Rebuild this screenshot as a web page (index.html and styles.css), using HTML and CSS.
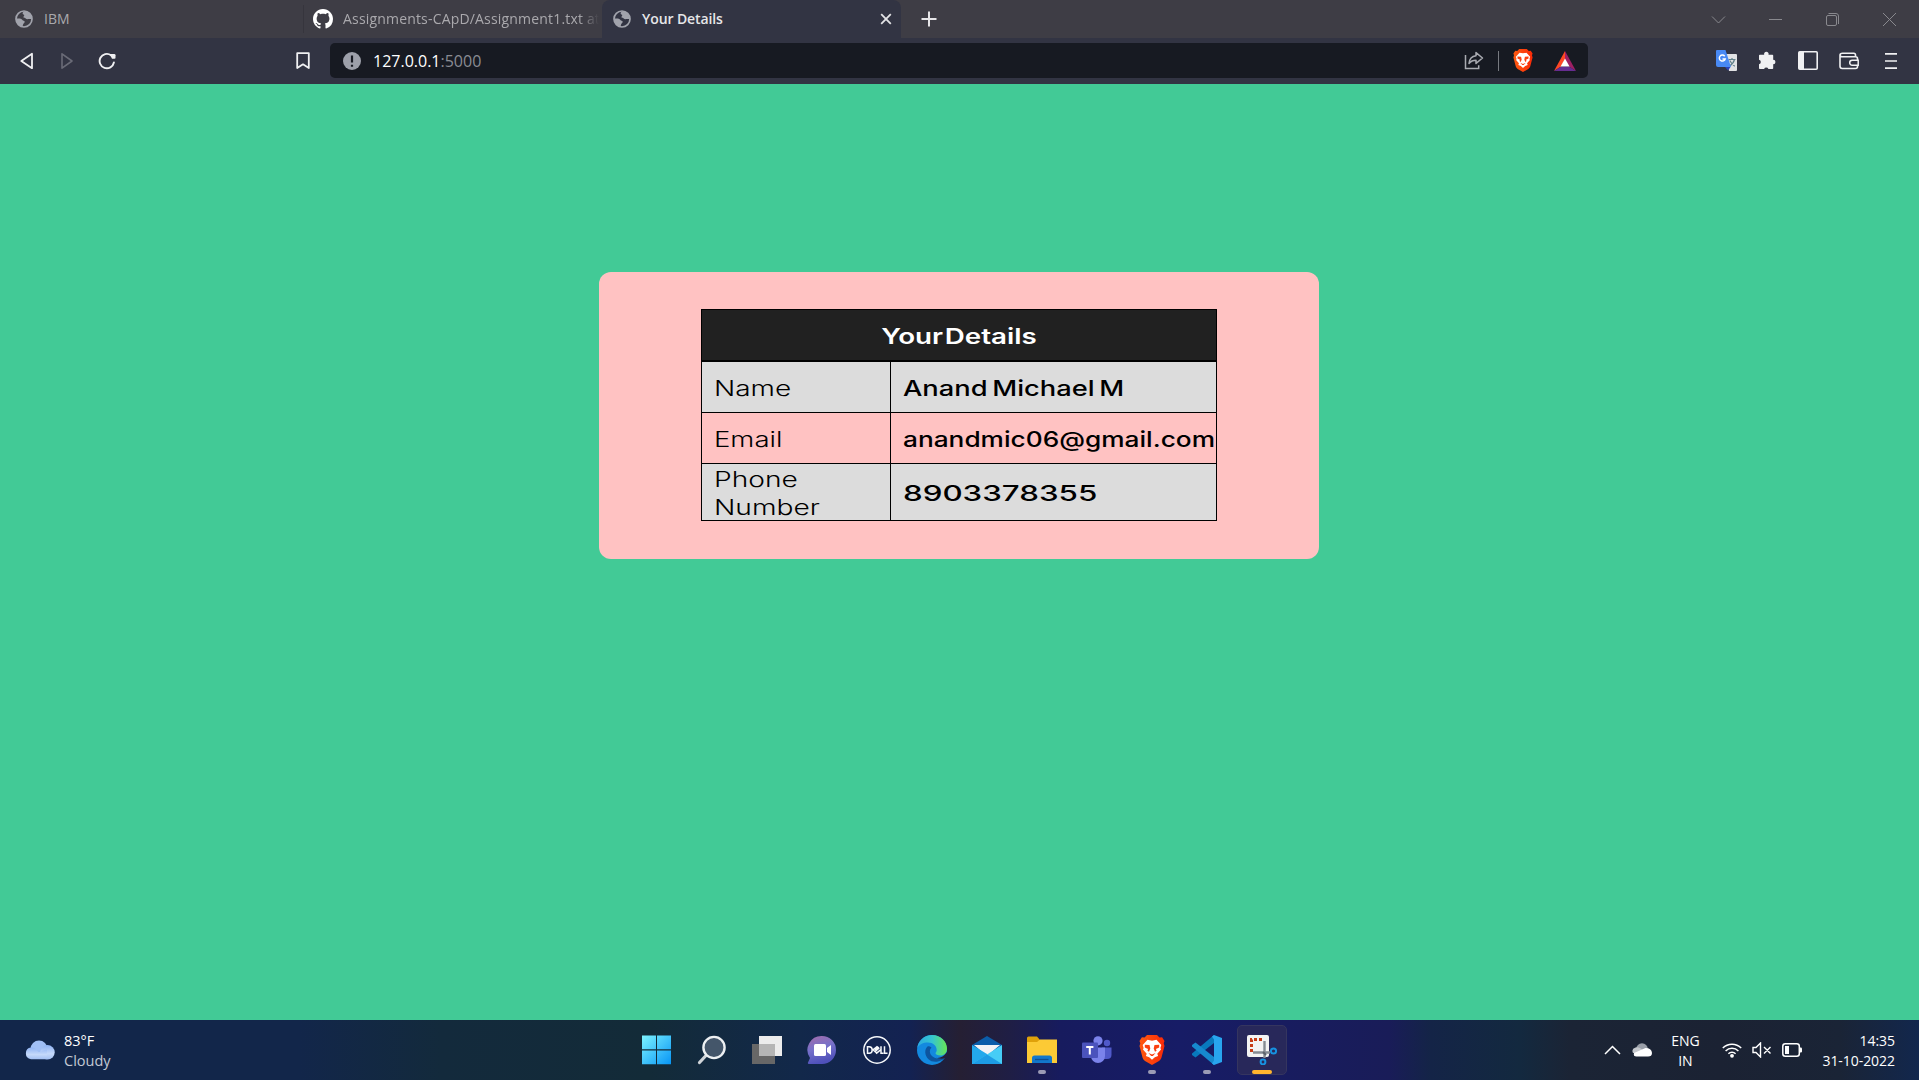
FILE: index.html
```html
<!DOCTYPE html>
<html lang="en">
<head>
<meta charset="utf-8">
<title>Your Details</title>
<link rel="stylesheet" href="styles.css">
</head>
<body>
<svg class="defs" width="0" height="0">
  <defs>
    <symbol id="globe" viewBox="0 0 18 18">
      <circle cx="9" cy="9" r="8" fill="none" stroke="currentColor" stroke-width="1.7"/>
      <path fill="currentColor" d="M9 1.200c-1 1-1.600 1.600-1.300 2.500.3.900 1.300.5 1.500 1.400.2 1-.9 1.300-.7 2.200.2.800 1.500.5 2.200 1.300.6.700 1.800.7 2.900.500 1.200-.2 2.400-.3 3.200-.1C16.800 4.500 13.500 1 9 1.200zM1.300 8.500c1.800 0 3.600-.2 5 .4 1.200.5 1.100 1.600 2.300 1.900 1 .2 1.300.8.900 1.800-.4.900-1.200.9-1.400 1.900-.1.800-.3 1.500-.9 2C3.800 15.600 1 12.800 1.300 8.500z"/>
    </symbol>
    <linearGradient id="braveGrad"><stop offset="0" stop-color="#ff5a10"/><stop offset="1" stop-color="#f92a08"/></linearGradient>
    <symbol id="brave" viewBox="0 0 26 30">
      <path fill="url(#braveGrad)" d="M8 0h10l2.500 2.600 2.600-.4L25.500 6l-.8 2.300.8 2.800-3 11.500c-.5 1.700-1.300 2.500-2.500 3.400L13 30l-7-4c-1.200-.9-2-1.700-2.500-3.400L.5 11.100l.8-2.800L.5 6l2.400-3.800 2.600.4z"/>
      <path fill="#fff" d="M8.500 4.800 13 5.700l4.500-.9 4.800 5.200-.9 2.900.6 1.600-3.700 4.200.8 2.200-3.300 1.400L13 24.700l-2.800-2.400-3.300-1.400.8-2.200L4 14.500l.6-1.600-.9-2.900z"/>
      <path fill="#fb4010" d="m5.800 9.700 4.700.4.800 3.500-1.300 3.200-1.600-1 .7-1.800-3.300-1.600zM20.200 9.700l-4.700.4-.8 3.500 1.300 3.200 1.600-1-.7-1.800 3.300-1.600zM9.500 18l3.500 1.500 3.500-1.500-2.600 3H12.100z"/>
    </symbol>
  </defs>
</svg>

<header class="tabs">
  <div class="tab tab-first">
    <svg class="favicon" width="18" height="18"><use href="#globe"/></svg>
    <span class="tab-title">IBM</span>
  </div>
  <div class="tab tab-second">
    <svg width="20" height="20" viewBox="0 0 16 16"><path fill="#fff" d="M8 0C3.580 0 0 3.580 0 8c0 3.540 2.290 6.530 5.470 7.590.4.070.55-.17.55-.38 0-.19-.01-.82-.01-1.490-2.010.37-2.530-.49-2.690-.94-.09-.23-.48-.94-.82-1.130-.28-.15-.68-.52-.01-.53.63-.01 1.080.58 1.230.82.72 1.210 1.870.87 2.330.66.07-.52.28-.87.51-1.070-1.780-.2-3.640-.89-3.640-3.950 0-.87.31-1.590.82-2.150-.08-.2-.36-1.020.08-2.120 0 0 .67-.21 2.200.82.64-.18 1.320-.27 2-.27s1.360.09 2 .27c1.530-1.040 2.200-.82 2.200-.82.44 1.100.16 1.920.08 2.120.51.56.82 1.270.82 2.150 0 3.070-1.870 3.750-3.650 3.950.29.25.54.73.54 1.480 0 1.070-.01 1.930-.01 2.200 0 .21.15.46.55.38A8.010 8.010 0 0 0 16 8c0-4.420-3.580-8-8-8z"/></svg>
    <span class="tab-title tab-title-long">Assignments-CApD/Assignment1.txt at</span>
  </div>
  <div class="tab tab-active">
    <svg class="favicon" width="18" height="18"><use href="#globe"/></svg>
    <span class="tab-title">Your Details</span>
    <svg class="tab-close" width="12" height="12" viewBox="0 0 12 12"><path d="m1.200 1.200 9.600 9.600m0-9.600-9.600 9.600" stroke="#e3e3e6" stroke-width="1.800"/></svg>
  </div>
  <svg class="new-tab" width="16" height="16" viewBox="0 0 16 16"><path d="M8 .5v15M.5 8h15" stroke="#e6e6e8" stroke-width="2"/></svg>
  <div class="window-controls">
    <svg width="15" height="15" viewBox="0 0 15 15"><path d="m1 4.500 6.500 6.500L14 4.500"/></svg>
    <svg width="15" height="15" viewBox="0 0 15 15"><path d="M1 7.500h13"/></svg>
    <svg width="15" height="15" viewBox="0 0 15 15"><rect x="1.500" y="3.500" width="10" height="10" rx="1.500"/><path d="M3.500 1.500H11a2.500 2.500 0 0 1 2.500 2.500v8"/></svg>
    <svg width="15" height="15" viewBox="0 0 15 15"><path d="m1 1 13 13M14 1 1 14"/></svg>
  </div>
</header>

<nav class="toolbar">
  <div class="nav-buttons">
    <svg width="16" height="18" viewBox="0 0 16 18"><path d="M13 1.800v14.400L2.300 9z" fill="none" stroke="#f0f0f2" stroke-width="1.800" stroke-linejoin="round"/></svg>
    <svg width="16" height="18" viewBox="0 0 16 18"><path d="M3 1.800v14.400L13 9z" fill="none" stroke="#6a6b77" stroke-width="1.600" stroke-linejoin="round"/></svg>
    <svg width="18" height="18" viewBox="0 0 18 18"><path d="M13 3.200A7.200 7.200 0 1 0 15.900 10.500" fill="none" stroke="#f0f0f2" stroke-width="1.900" stroke-linecap="round"/><path d="M11.500 2h4.700q1.300 0 1.300 1.300v2.500q0 1-1 1h-2.500z" fill="#f0f0f2"/></svg>
  </div>
  <svg class="bookmark" width="14" height="18" viewBox="0 0 14 18"><path d="M1.200 1.200h11.600v14.900L7 12.300l-5.800 3.800z" fill="none" stroke="#f0f0f2" stroke-width="1.800" stroke-linejoin="round"/></svg>
  <div class="address">
    <svg width="18" height="18" viewBox="0 0 18 18"><circle cx="9" cy="9" r="9" fill="#9da0aa"/><path d="M9 3.400v7.200M9 12.800v2" stroke="#171a22" stroke-width="2.200"/></svg>
    <span class="host">127.0.0.1<span class="port">:5000</span></span>
    <div class="address-actions">
      <svg width="20" height="19" viewBox="0 0 20 19"><path d="M1.500 4v13.500h13.200v-3.300" fill="none" stroke="#a9abb1" stroke-width="1.500"/><path d="M12 1.600 18.500 7 12 12.400V9.300c-3 0-5.100.8-7 3.200.4-4 2.800-7.200 7-7.700z" fill="none" stroke="#a9abb1" stroke-width="1.500" stroke-linejoin="round"/></svg>
      <i class="divider"></i>
      <svg class="brave-small" width="20" height="23"><use href="#brave"/></svg>
      <svg width="22" height="20" viewBox="0 0 22 20"><path fill="#ff4724" d="M11 0 0 20l7-4.500L11 8.500z"/><path fill="#9e1f63" d="m11 0 11 20-7-4.500-4-7z"/><path fill="#662d91" d="M0 20h22l-7-4.500H7z"/><path fill="#fff" d="m11 7.500 4.500 8h-9z"/></svg>
    </div>
  </div>
  <div class="extensions">
    <svg width="21" height="21" viewBox="0 0 21 21"><path fill="#e1e2e4" d="M10 4h10q1 0 1 1v15q0 1-1 1h-7z"/><path d="M12.500 9.500h7M16 8v1.500M18.500 9.500q-1 4-5 6.500M13.800 10.500q2 4 5 5.700" fill="none" stroke="#61808a" stroke-width="1.200"/><path fill="#2a43b9" d="M9 17h5.500L12 20.500z"/><path fill="#4889f4" d="M1 0h8.500L15 17H2q-2 0-2-2V1q0-1 1-1z"/><path d="M8.700 6.200A3 3 0 1 0 9.200 9H6.500" fill="none" stroke="#fff" stroke-width="1.500"/></svg>
    <svg width="19" height="19" viewBox="0 0 19 19"><path fill="#f0f0f2" d="M1.800 3.800h4.400a2.300 2.300 0 1 1 4.300 0h3.900q.8 0 .8.800v4.100a2.250 2.250 0 1 1 0 4.500v4.100q0 .8-.8.800h-4a2.300 2.300 0 0 0-4.300 0H1.800q-.8 0-.8-.8v-4.100a2.300 2.300 0 0 0 0-4.500V4.600q0-.8.800-.8z"/></svg>
    <svg width="20" height="20" viewBox="0 0 20 20"><rect x=".8" y=".8" width="18.400" height="17.400" rx="1" fill="none" stroke="#f0f0f2" stroke-width="1.600"/><path fill="#f0f0f2" d="M1 1h5v17H1z"/></svg>
    <svg width="20" height="18" viewBox="0 0 20 18"><path d="M16.500 5V3q0-1.700-1.700-1.700H3.500q-2.500 0-2.500 2v11q0 2.200 2.200 2.200h13.300q2 0 2-2V6.500q0-1.700-2-1.700H3.500Q1 4.800 1 3.200" fill="none" stroke="#f0f0f2" stroke-width="1.600"/><path d="M19.200 8.200h-6a2.500 2.500 0 0 0 0 5h6z" fill="#323443" stroke="#f0f0f2" stroke-width="1.500"/></svg>
    <svg width="12" height="18" viewBox="0 0 12 18"><path d="M0 1.800h12M0 9h12M0 16.200h12" stroke="#f0f0f2" stroke-width="1.700"/></svg>
  </div>
</nav>

<main class="page">
  <section class="card">
    <div class="details">
      <div class="row head"><span class="wide title">Your Details</span></div>
      <div class="row shaded"><div class="cell"><span class="wide w-name">Name</span></div><div class="cell value"><span class="wide w-person">Anand Michael M</span></div></div>
      <div class="row"><div class="cell"><span class="wide w-email">Email</span></div><div class="cell value"><span class="wide w-address">anandmic06@gmail.com</span></div></div>
      <div class="row shaded tall"><div class="cell"><span class="wide w-phone">Phone<br>Number</span></div><div class="cell value"><span class="wide w-digits">8903378355</span></div></div>
    </div>
  </section>
</main>

<footer class="taskbar">
  <div class="weather">
    <svg width="30" height="20" viewBox="0 0 30 20"><defs><linearGradient id="cl" x2="0" y2="1"><stop stop-color="#8fb3f3"/><stop offset=".6" stop-color="#c5d9fa"/><stop offset="1" stop-color="#a3c0f2"/></linearGradient></defs><circle cx="14" cy="9" r="8.500" fill="#a0bff5"/><circle cx="22.500" cy="12.300" r="7.200" fill="url(#cl)"/><path fill="url(#cl)" d="M6 7.500c4 0 5 2 7 4s5-2 9-2v9.700H6a5.900 5.900 0 0 1 0-11.700z"/></svg>
    <div class="weather-text"><span>83°F</span><span class="muted">Cloudy</span></div>
  </div>

  <div class="apps">
    <div class="app"><svg width="30" height="30" viewBox="0 0 30 30"><defs><linearGradient id="win" x2="1" y2="1"><stop stop-color="#7df3ff"/><stop offset="1" stop-color="#0795f5"/></linearGradient></defs><path fill="url(#win)" d="M0 .5h14v13.800H0zM15 .5h14v13.800H15zM0 15.500h14v13.800H0zM15 15.500h14v13.800H15z"/></svg></div>
    <div class="app"><svg width="30" height="30" viewBox="0 0 30 30"><path d="m9.500 20-7 7.500" stroke="#d0d5d9" stroke-width="3.200" stroke-linecap="round"/><circle cx="17" cy="12.500" r="10.600" fill="#44566a" stroke="#edf0f2" stroke-width="2.400"/></svg></div>
    <div class="app"><svg width="30" height="30" viewBox="0 0 30 30"><path fill="#676767" d="M0 9h23v20H0z"/><path fill="#ececec" d="M7 1h23v20H7z"/><path fill="#b5b5b5" d="M7 9h16v12H7z"/></svg></div>
    <div class="app"><svg width="30" height="30" viewBox="0 0 30 30"><defs><linearGradient id="chat" x2=".3" y2="1"><stop stop-color="#a56ca9"/><stop offset=".5" stop-color="#7671ca"/><stop offset="1" stop-color="#4f51ba"/></linearGradient></defs><path fill="url(#chat)" d="M15 1a14 14 0 1 1 0 28H1.500Q.5 28.500 1 27.500L3 23A14 14 0 0 1 15 1z"/><rect x="7" y="9" width="12" height="12" rx="1.500" fill="#fff"/><path fill="#fff" d="m20 13 4-3v10l-4-3z"/></svg></div>
    <div class="app"><svg class="dell" width="30" height="30" viewBox="0 0 30 30"><circle cx="15" cy="15" r="13.200" fill="none" stroke="#f5f7fa" stroke-width="1.500"/><path d="M5.500 11.700v6.600h1.700q3 0 3-3.300t-3-3.300zm5.200 3.400 4.300-3.500 1.300 1-3.200 2.600m-1.600 0 1.500 1.300 4.300-3.500m-4 3.500 1.300 1.600 4-3.300M19 11.200v7.100h2.500M22.500 11.200v7.100h3" fill="none" stroke="#f5f7fa" stroke-width="1.500"/></svg></div>
    <div class="app"><svg width="30" height="30" viewBox="0 0 30 30"><defs><linearGradient id="edgeTop"><stop stop-color="#2ba8e0"/><stop offset=".5" stop-color="#35c5d0"/><stop offset="1" stop-color="#67e653"/></linearGradient></defs><circle cx="15" cy="15" r="15" fill="#1389df"/><path fill="url(#edgeTop)" d="M.2 13A15 15 0 0 1 15 0c9 0 15 6.500 15 13.500 0 4.500-3 7-6.500 7-3.200 0-5-1.200-5-2.300 0-.8 1.200-1.300 1.200-3.300C19.700 11 16 7.500 11 7.500 6 7.500 2 9.500.2 13z"/><path fill="#0d559f" d="M10.800 11.300C7.200 14 7.500 20.500 11.500 24.300c3 2.900 8.500 3.500 13.500.800 1-.5 2.300-1.500 2.800-2.400C23 25 16.500 23.500 14 20c-1.500-2.200-1.800-5.200.5-7.500-1-.8-2.500-1.300-3.700-1.200z"/><path d="M30 17v5l-2.500 1.200q-4.500 1.300-8.500-.4 6 1 11-5.800z" fill="#241f3b"/></svg></div>
    <div class="app"><svg width="30" height="30" viewBox="0 0 30 30"><path fill="#0b5daa" d="M15 1 30 10v8H0v-8z"/><path fill="#f3f3f5" d="M2 10h26L15 21z"/><path fill="#23a9ec" d="m0 10 15 9v10H0z"/><path fill="#46cdf6" d="M30 10v19H0z"/><path fill="#1d9ce5" d="m15 19.500 15 9.500H0z"/></svg></div>
    <div class="app open"><svg width="30" height="30" viewBox="0 0 30 30"><path fill="#dfa10a" d="M0 3q0-1.500 1.500-1.500H10L13 5v7H0z"/><path fill="#fcca35" d="M0 7h10l3-2.500h17V28H0z"/><path fill="#1277ca" d="M5 28v-5q0-2.500 2.500-2.500h15Q25 20.500 25 23v5z"/><path d="M8 24.500h13.500" stroke="#0d4e91" stroke-width="1.300"/></svg></div>
    <div class="app"><svg width="30" height="30" viewBox="0 0 30 30"><circle cx="25" cy="8" r="3.200" fill="#5059c9"/><path fill="#5059c9" d="M20 12.500h9.500V20q0 4-4.500 4h-5z"/><circle cx="16" cy="5.800" r="4.600" fill="#7b83eb"/><path fill="#7b83eb" d="M9 12.500h14V21a7 7 0 0 1-14 0z"/><rect y="7.500" width="16" height="15.500" rx="1" fill="#4b53bc"/><path d="M4.200 12h7.200M7.800 12v7.500" stroke="#fff" stroke-width="2"/></svg></div>
    <div class="app open"><svg width="26" height="30"><use href="#brave"/></svg></div>
    <div class="app open"><svg width="30" height="30" viewBox="0 0 30 30"><path fill="#0879bd" d="M22 0v8L3.500 22.500 0 20v-1.500z"/><path fill="#1689ce" d="M22 30v-8L3.500 7.500 0 10v1.500z"/><path fill="#28a5ef" d="M22 0l8 3v24l-8 3-2-1.500 2-3V4.500l-2-3z"/></svg></div>
    <div class="app current"><svg width="32" height="30" viewBox="0 0 32 30"><rect x="1" width="22" height="22" rx="2" fill="#f3f3f3"/><path d="M5.500 17V4.500H17" fill="none" stroke="#c63b15" stroke-width="3" stroke-dasharray="3 2"/><path d="M18.500 6v17M7 17.500h17" stroke="#858b92" stroke-width="2.400"/><path d="m17 17 3 3" stroke="#5e646c" stroke-width="2"/><circle cx="27.500" cy="16" r="2.600" fill="none" stroke="#1792e0" stroke-width="2"/><circle cx="17" cy="27" r="2.400" fill="none" stroke="#1792e0" stroke-width="2"/></svg></div>
  </div>

  <div class="tray">
    <svg width="17" height="10" viewBox="0 0 17 10"><path d="m1 9 7.500-7.500L16 9" fill="none" stroke="#fff" stroke-width="1.500"/></svg>
    <svg class="onedrive" width="20" height="14" viewBox="0 0 20 14"><circle cx="10" cy="6" r="5.800" fill="#9a9fa8"/><path fill="#c4c7cc" d="M3.500 4.500q3-1 6 1.500l5 4H1Q-1 6 3.500 4.500z"/><path fill="#fff" d="M2 10 13.500 5q6 0 6.500 5 0 3.500-4 3.500H4.500Q1 13.500 2 10z"/></svg>
    <div class="stack lang"><span>ENG</span><span>IN</span></div>
    <div class="status">
      <svg width="20" height="16" viewBox="0 0 20 16"><path d="M.8 6a13 13 0 0 1 18.400 0M3.600 9a9 9 0 0 1 12.800 0M6.400 11.800a5 5 0 0 1 7.200 0" fill="none" stroke="#fff" stroke-width="1.500"/><circle cx="10" cy="13.800" r="1.900" fill="#fff"/></svg>
      <svg width="20" height="16" viewBox="0 0 20 16"><path d="M1 5.500h3L8.500 1v14L4 10.500H1zM12 5l6.500 6.500m0-6.500L12 11.500" fill="none" stroke="#fff" stroke-width="1.400"/></svg>
      <svg width="21" height="14" viewBox="0 0 21 14"><rect x=".8" y=".8" width="16.500" height="12.400" rx="2.500" fill="none" stroke="#fff" stroke-width="1.500"/><rect x="3" y="3" width="4" height="8" fill="#fff"/><path d="M17.500 4.500h1.200q1.300 0 1.300 1v3q0 1-1.300 1h-1.200z" fill="#fff"/></svg>
    </div>
    <div class="stack clock"><span>14:35</span><span>31-10-2022</span></div>
  </div>
</footer>
</body>
</html>
```
FILE: styles.css
```css
* { box-sizing: border-box; }

body {
  margin: 0;
  height: 1080px;
  overflow: hidden;
  display: flex;
  flex-direction: column;
  font-family: "Open Sans", "Noto Sans", sans-serif;
  font-size: 14px;
}

svg { display: block; flex: none; }
.defs { position: absolute; }

/* Tab strip */
.tabs {
  height: 38px;
  flex: none;
  display: flex;
  align-items: center;
  background: #3e3d45;
  color: #aaa9ad;
}
.tab { display: flex; align-items: center; height: 38px; }
.tab-first { width: 304px; padding-left: 15px; gap: 11px; }
.tab-first::after {
  content: "";
  width: 1px;
  height: 28px;
  margin-left: auto;
  background: #36353d;
}
.tab-second { width: 298px; padding-left: 9px; gap: 10px; }
.tab-title { white-space: nowrap; padding-bottom: 2px; }
.tab-title-long {
  width: 259px;
  letter-spacing: .18px;
  -webkit-mask-image: linear-gradient(90deg, #000 236px, transparent 256px);
  mask-image: linear-gradient(90deg, #000 236px, transparent 256px);
}
.tab-active {
  width: 299px;
  padding: 0 9px 0 11px;
  gap: 11px;
  border-radius: 8px 8px 0 0;
  background: #323443;
  color: #e6e6e8;
}
.tab-active .tab-title { font-weight: 600; letter-spacing: -.1px; }
.tab-close { margin-left: auto; }
.favicon { color: #a1a3ac; }
.new-tab { margin-left: 20px; }
.window-controls {
  margin-left: auto;
  padding-right: 22px;
  display: flex;
  gap: 42px;
  fill: none;
  stroke: #89898e;
  stroke-width: 1;
}

/* Navigation bar */
.toolbar {
  height: 46px;
  flex: none;
  display: flex;
  align-items: center;
  padding: 0 22px 1px 19px;
  background: #323443;
}
.nav-buttons { display: flex; gap: 24px; width: 277px; }
.nav-buttons svg:nth-child(3) { margin-left: -1px; }
.bookmark { margin-right: 20px; }
.address {
  width: 1258px;
  height: 35px;
  display: flex;
  align-items: center;
  padding: 0 12px 0 13px;
  border-radius: 5px;
  background: #171a22;
}
.host { margin-left: 12px; font-size: 16px; color: #fff; }
.port { color: #8a8c93; }
.address-actions { margin-left: auto; display: flex; align-items: center; }
.divider { width: 1px; height: 20px; margin: 0 14px 0 14px; background: #777a80; }
.brave-small { margin-right: 21px; }
.extensions { margin-left: auto; display: flex; align-items: center; gap: 21px; }
.extensions svg:nth-child(5) { margin-left: 5px; }

/* Page */
.page {
  flex: 1;
  display: flex;
  justify-content: center;
  align-items: flex-start;
  padding: 188px 1px 0 0;
  background: #42ca96;
}
.card {
  width: 720px;
  height: 287px;
  display: flex;
  justify-content: center;
  padding-top: 37px;
  border-radius: 12px;
  background: #ffc2c2;
}
.details {
  width: 516px;
  height: 212px;
  border: 1px solid #000;
  font: 300 21px/28px Inter, "Liberation Sans", sans-serif;
  color: #000;
}
.row { display: flex; height: 51px; border-bottom: 1px solid #000; }
.head {
  height: 52px;
  justify-content: center;
  align-items: center;
  border-bottom-width: 2px;
  background: #212121;
  color: #fff;
}
.shaded { background: #dcdcdc; }
.tall { height: 56px; border-bottom: 0; }
.cell { width: 189px; padding-left: 12px; display: flex; align-items: center; border-right: 1px solid #000; }
.value { width: 325px; padding-left: 12px; border-right: 0; font-weight: 500; }
.wide { display: inline-block; white-space: nowrap; transform-origin: left center; }
.title { font-weight: 600; word-spacing: -4px; transform-origin: center; transform: translateY(2px) scaleX(1.32); }
.w-name { transform: translateY(2px) scaleX(1.33); }
.w-email { transform: translateY(2px) scaleX(1.31); }
.w-phone { transform: translateY(2px) scaleX(1.34); }
.w-person { word-spacing: -2px; transform: translateY(2px) scaleX(1.3); }
.w-address { transform: translateY(2px) scaleX(1.25); }
.w-digits { transform: translateY(2px) scaleX(1.49); }

/* Taskbar */
.taskbar {
  height: 60px;
  flex: none;
  display: grid;
  grid-template-columns: 629px 660px 1fr;
  color: #fff;
  background: linear-gradient(90deg, #12264a 0, #12264a 300px, #132a3c 440px, #132b38 650px, #12284a 800px, #132252 910px, #251f33 960px, #1f1e45 1010px, #171b5e 1060px, #171c66 1180px, #191c58 1390px, #142447 1430px, #13293f 1520px, #1b2435 1570px, #1b2233 1720px, #1a2436 1840px, #12274d 1919px);
}
.weather { display: flex; align-items: center; padding-left: 25px; gap: 9px; }
.weather-text, .stack { display: flex; flex-direction: column; line-height: 20px; padding-top: 1px; }
.weather-text { padding-top: 2px; }
.weather-text span:first-child { font-size: 14.5px; }
.muted { font-size: 14.5px; color: #c3c9d4; }
.apps { display: grid; grid-template-columns: repeat(12, 55px); }
.app { position: relative; display: flex; align-items: center; justify-content: center; }
.open::after {
  content: "";
  position: absolute;
  bottom: 6px;
  width: 8px;
  height: 4px;
  border-radius: 2px;
  background: #9b9bb5;
}
.current { width: 50px; height: 50px; margin: 5px 0 0 3px; border: 1px solid #35355f; border-radius: 5px; background: #28285a; }
.current::after {
  content: "";
  position: absolute;
  bottom: 0;
  width: 20px;
  height: 4px;
  border-radius: 2px;
  background: #ffb52e;
}
.tray { display: flex; align-items: center; justify-content: flex-end; padding-right: 24px; }
.tray > svg:first-child { margin-right: -1px; }
.onedrive { margin-left: 12px; }
.lang { width: 66px; text-align: center; padding-top: 2px; }
.status { display: flex; align-items: center; gap: 10px; margin: 0 19px 0 4px; }
.clock { text-align: right; letter-spacing: -.05px; }
```
